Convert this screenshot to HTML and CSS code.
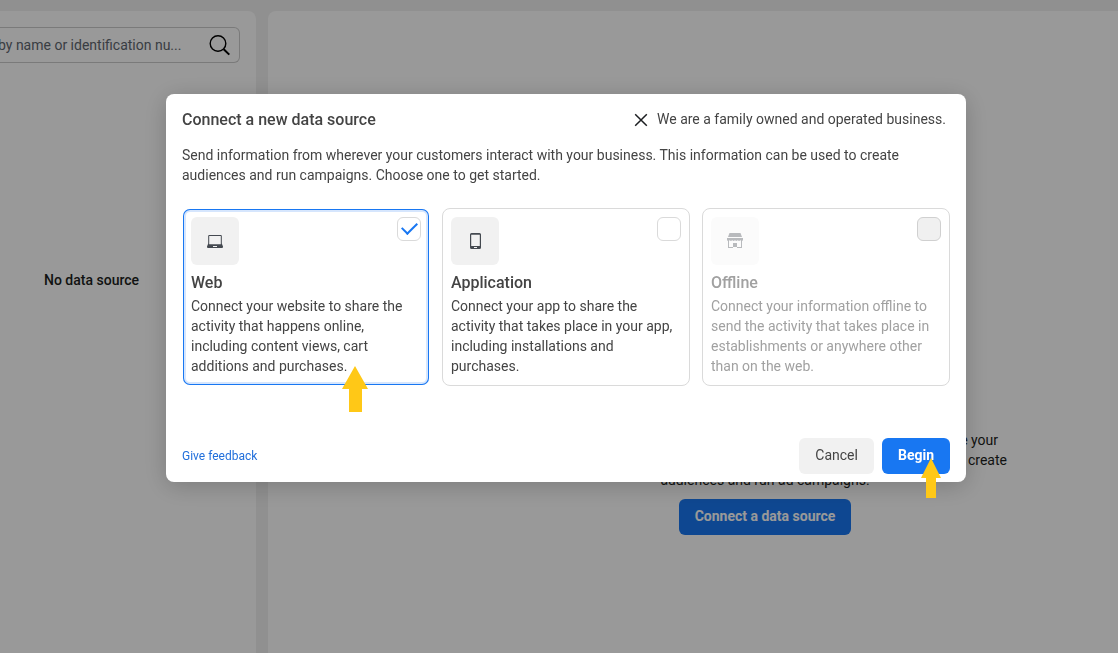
FILE: index.html
```html
<!DOCTYPE html>
<html lang="en">
<head>
<meta charset="utf-8">
<meta name="viewport" content="width=device-width, initial-scale=1">
<title>Connect a new data source</title>
<link rel="stylesheet" href="styles.css">
</head>
<body>
<div class="page">
  <aside class="sources">
    <label class="search">
      <input class="search-input" type="text" aria-label="Search" placeholder="by name or identification nu...">
      <svg class="search-icon" width="22" height="22" viewBox="0 0 22 22" fill="none" stroke="#000"><circle cx="9" cy="9.500" r="7.800" stroke-width="1.400"/><path d="M14.700 15.200l5.600 5.400" stroke-width="2"/></svg>
    </label>
    <p class="empty">No data source</p>
  </aside>
  <main class="content">
    <p class="intro">
      <span class="intro-line intro-first">e your</span>
      <span class="intro-line intro-second">create</span>
      <span class="intro-line">audiences and run ad campaigns.</span>
    </p>
    <button class="btn btn-primary" type="button">Connect a data source</button>
  </main>
</div>
<div class="overlay">
  <section class="modal" role="dialog" aria-labelledby="modal-title">
    <header class="modal-header">
      <h1 class="modal-title" id="modal-title">Connect a new data source</h1>
      <button class="close" type="button">
        <svg width="14" height="14" viewBox="0 0 14 14" fill="none" stroke="#1c1e21" stroke-width="1.500"><path d="M1.200 1.200l11.600 11.600M12.800 1.200L1.200 12.800"/></svg>
        <span class="close-text">We are a family owned and operated business.</span>
      </button>
    </header>
    <p class="lead">Send information from wherever your customers interact with your business. This information can be used to create audiences and run campaigns. Choose one to get started.</p>
    <div class="cards">
      <label class="card card-selected">
        <span class="card-top">
          <span class="tile"><svg width="16" height="16" viewBox="0 0 16 16"><path fill="#444950" fill-rule="evenodd" d="M2.200 2h11.600a1 1 0 0 1 1 1v7.500l1.200 3v.5a1 1 0 0 1-1 1H1a1 1 0 0 1-1-1v-.5l1.200-3V3a1 1 0 0 1 1-1zm0 1.100v8.100h11.600V3.100zM6 13v.9h4V13z"/></svg></span>
          <input class="check" type="checkbox" checked>
        </span>
        <span class="card-title">Web</span>
        <span class="card-text">Connect your website to share the activity that happens online, including content views, cart additions and purchases.</span>
      </label>
      <label class="card">
        <span class="card-top">
          <span class="tile"><svg width="16" height="16" viewBox="0 0 16 16"><path fill="#444950" fill-rule="evenodd" d="M4 0h8.500a1.500 1.500 0 0 1 1.500 1.500v13a1.500 1.500 0 0 1-1.500 1.500H4.500A1.500 1.500 0 0 1 3 14.500v-13A1.500 1.500 0 0 1 4.500 0zM4.200 1.700V13h8.600V1.700zM7 14v1h3v-1z"/></svg></span>
          <input class="check" type="checkbox">
        </span>
        <span class="card-title">Application</span>
        <span class="card-text">Connect your app to share the activity that takes place in your app, including installations and purchases.</span>
      </label>
      <label class="card card-disabled">
        <span class="card-top">
          <span class="tile"><svg width="16" height="16" viewBox="0 0 16 16" fill="#b8babd"><path d="M2.500 0h11L15 4H1zM0 5h16v2.200l-1 .8-1.500-.7L12 8l-1.300-.7-1.400.7L8 7.300 6.700 8l-1.400-.7L4 8l-1.500-.7L1 8l-1-.8z"/><path fill-rule="evenodd" d="M1 7h14v8H1zM2 7v7h12V7zM6 10h4v5H6z"/></svg></span>
          <input class="check" type="checkbox" disabled>
        </span>
        <span class="card-title">Offline</span>
        <span class="card-text">Connect your information offline to send the activity that takes place in establishments or anywhere other than on the web.</span>
      </label>
    </div>
    <footer class="modal-footer">
      <a class="feedback" href="#">Give feedback</a>
      <div class="actions">
        <button class="btn btn-plain" type="button">Cancel</button>
        <button class="btn btn-primary" type="button">Begin</button>
      </div>
    </footer>
    <svg class="arrow arrow-card" viewBox="0 0 26 46"><path fill="#ffc817" d="M13 0l13 23h-6v23H7V23H0z"/></svg>
    <svg class="arrow arrow-begin" viewBox="0 0 20 40"><path fill="#ffc817" d="M10 0l10 20h-5v20H5V20H0z"/></svg>
  </section>
</div>
</body>
</html>
```
FILE: styles.css
```css
* { box-sizing: border-box; }
body {
  margin: 0;
  font-family: Roboto, "Liberation Sans", sans-serif;
  font-size: 14px;
  line-height: 20px;
  color: #1c1e21;
  background: #f0f0f0;
}
p, h1 { margin: 0; }
button, input { font: inherit; }
.page {
  display: grid;
  grid-template-columns: 256px 1fr;
  gap: 12px;
  min-height: 100vh;
  padding-top: 11px;
}
.sources {
  background: #fff;
  border-top-right-radius: 8px;
  padding: 16px 16px 0 0;
}
.search {
  display: flex;
  align-items: center;
  height: 36px;
  padding-right: 8px;
  border: 1px solid #ccc;
  border-left: 0;
  border-radius: 0 6px 6px 0;
}
.search-input {
  flex: 1;
  min-width: 0;
  padding: 0;
  border: 0;
  background: none;
  text-indent: -2px;
}
.search-input::placeholder { color: #606770; opacity: 1; }
.empty {
  margin-top: 207px;
  padding-left: 44px;
  font-weight: 500;
}
.content {
  display: flex;
  flex-direction: column;
  align-items: center;
  gap: 9px;
  padding: 419px 0 0 144px;
  background: #fff;
  border-top-left-radius: 8px;
}
.intro {
  width: 484px;
  max-width: 100%;
  text-align: center;
}
.intro-line { display: block; }
.intro-first, .intro-second { text-align: right; }
.intro-first { padding-right: 9px; }
.btn {
  height: 36px;
  padding: 0 16px 2px;
  border: 0;
  border-radius: 6px;
  line-height: 20px;
}
.btn-primary { background: #1877f2; color: #fff; font-weight: 700; }
.btn-plain { background: #f1f1f1; color: #444; }
.overlay {
  position: fixed;
  inset: 0;
  display: flex;
  justify-content: center;
  align-items: flex-start;
  padding: 94px 0 0 14px;
  background: rgba(0, 0, 0, 0.4);
}
.modal {
  position: relative;
  width: 100%;
  max-width: 800px;
  padding: 16px 16px 8px;
  border-radius: 8px;
  background: #fff;
  color: #444;
  box-shadow: 0 4px 24px rgba(0, 0, 0, 0.2);
}
.modal-header {
  display: flex;
  justify-content: space-between;
  align-items: center;
  height: 20px;
}
.modal-title { font-size: 16px; line-height: 20px; font-weight: 500; }
.close {
  display: flex;
  align-items: center;
  gap: 9px;
  padding: 0 4px 0 0;
  border: 0;
  background: none;
  color: #444;
}
.close-text { padding-bottom: 2px; }
.lead { margin-top: 15px; }
.cards {
  display: grid;
  grid-template-columns: repeat(3, 1fr);
  gap: 12px;
  margin-top: 23px;
}
.card {
  display: flex;
  flex-direction: column;
  padding: 8px 8px 9px;
  border: 1px solid #dadada;
  border-radius: 8px;
}
.card-selected {
  border-color: transparent;
  box-shadow: inset 0 0 0 1px #1877f2, inset 0 0 0 3px #d6e6fd;
}
.card-top {
  display: flex;
  justify-content: space-between;
  align-items: flex-start;
}
.tile {
  display: grid;
  place-items: center;
  width: 48px;
  height: 48px;
  border-radius: 6px;
  background: #f1f1f1;
}
.check {
  appearance: none;
  width: 24px;
  height: 24px;
  margin: 0;
  border: 1px solid #dadada;
  border-radius: 6px;
  background: #fff;
}
.check:checked {
  display: grid;
  place-items: center;
}
.check:checked::before {
  content: "";
  width: 13px;
  height: 7px;
  margin-top: -5px;
  border: solid #1877f2;
  border-width: 0 0 2px 2px;
  transform: rotate(-45deg);
}
.check:disabled { background: #f0f0f0; border-color: #d0d0d0; }
.card-title {
  margin: 6px 0 1px;
  font-size: 16px;
  line-height: 24px;
  font-weight: 500;
}
.card-disabled { color: #a1a1a1; }
.card-disabled .tile { background: #fbfbfb; }
.modal-footer {
  display: flex;
  justify-content: space-between;
  align-items: center;
  margin-top: 52px;
}
.feedback { color: #216fdb; font-size: 12px; text-decoration: none; }
.actions { display: flex; gap: 8px; }
.arrow { position: absolute; pointer-events: none; }
.arrow-card { left: 176px; top: 272px; width: 26px; height: 46px; }
.arrow-begin { right: 25px; bottom: -16px; width: 20px; height: 40px; }
```
